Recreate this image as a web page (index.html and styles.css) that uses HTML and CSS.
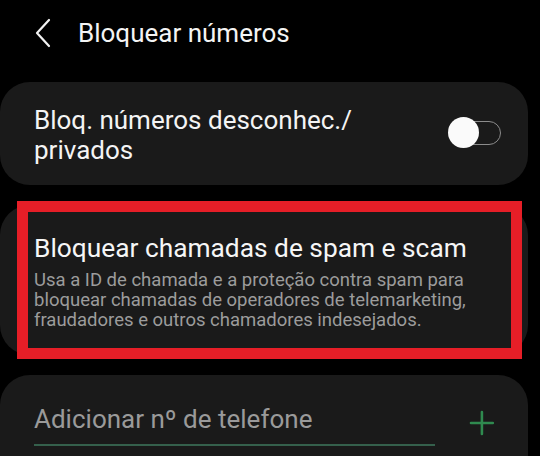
FILE: index.html
```html
<!DOCTYPE html>
<html lang="pt">
<head>
<meta charset="utf-8">
<link rel="stylesheet" href="styles.css">
</head>
<body>
<div class="screen">
  <header class="appbar">
    <svg class="back" width="18" height="30" viewBox="0 0 18 30">
      <path d="M15 2 L3 15 L15 28" fill="none" stroke="#f2f2f2" stroke-width="2.2" stroke-linecap="round" stroke-linejoin="round"/>
    </svg>
    <h1 class="title">Bloquear números</h1>
  </header>

  <section class="card card-toggle">
    <div class="card-label">Bloq. números desconhec./<br>privados</div>
    <div class="switch"><span class="knob"></span></div>
  </section>

  <section class="card card-spam">
    <div class="spam-title">Bloquear chamadas de spam e scam</div>
    <div class="spam-desc">Usa a ID de chamada e a proteção contra spam para<br>bloquear chamadas de operadores de telemarketing,<br>fraudadores e outros chamadores indesejados.</div>
    <div class="highlight"></div>
  </section>

  <section class="card card-add">
    <div class="add-field">Adicionar nº de telefone</div>
    <svg class="plus" width="26" height="26" viewBox="0 0 26 26">
      <path d="M13 2 V24 M2 13 H24" stroke="#2f8a4f" stroke-width="2.6" stroke-linecap="round"/>
    </svg>
  </section>
</div>
</body>
</html>
```

FILE: styles.css
```css
html, body {
  margin: 0;
  padding: 0;
  background: #000;
}
body {
  font-family: Roboto, "Noto Sans", "Liberation Sans", sans-serif;
  color: #f4f4f4;
  width: 540px;
  height: 456px;
  overflow: hidden;
}
.screen {
  display: flex;
  flex-direction: column;
  gap: 20px;
}
.appbar {
  display: flex;
  align-items: center;
  height: 32px;
  padding: 17px 0 13px 34px;
}
.back {
  display: block;
  margin-right: 26px;
}
.title {
  margin: 0;
  font-size: 26px;
  line-height: 32px;
  font-weight: 400;
  color: #f4f4f4;
}
.card {
  position: relative;
  width: 528px;
  box-sizing: border-box;
  background: #1a1a1a;
  border-radius: 30px;
  padding-left: 34px;
}
.card-toggle {
  height: 103px;
  display: flex;
  align-items: center;
  justify-content: space-between;
  padding-right: 27px;
}
.card-label {
  font-size: 26px;
  line-height: 30px;
  color: #f4f4f4;
  padding-top: 2px;
}
.switch {
  position: relative;
  width: 50px;
  height: 24px;
  box-sizing: border-box;
  border: 1.6px solid #8c8c8c;
  border-radius: 12px;
  margin-top: -2px;
}
.knob {
  position: absolute;
  left: -4px;
  top: -5px;
  width: 31px;
  height: 31px;
  border-radius: 50%;
  background: #fafafa;
}
.card-spam {
  height: 150px;
  padding-top: 28px;
}
.spam-title {
  font-size: 26.3px;
  line-height: 30px;
  color: #f6f6f6;
  margin-bottom: 7px;
}
.spam-desc {
  font-size: 18.5px;
  line-height: 20px;
  color: #9c9c9c;
}
.highlight {
  position: absolute;
  left: 17px;
  top: -4px;
  width: 505px;
  height: 158px;
  box-sizing: border-box;
  border: 11px solid #e61e27;
}
.card-add {
  height: 81px;
  padding-top: 29px;
  padding-right: 33px;
  display: flex;
  align-items: flex-start;
  gap: 34px;
  border-radius: 30px 30px 0 0;
}
.add-field {
  width: 404px;
  font-size: 26px;
  line-height: 30px;
  color: #9a9a9a;
  padding-bottom: 10px;
  border-bottom: 2px solid #35604c;
}
.plus {
  display: block;
  margin-top: 6px;
}
```
